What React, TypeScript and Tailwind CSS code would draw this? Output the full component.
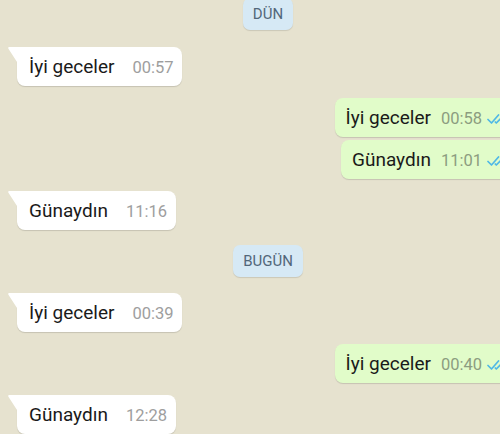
import React from 'react'

type Msg =
  | { kind: 'day'; label: string; mt: string }
  | { kind: 'in' | 'out'; text: string; time: string; mt: string; tail?: boolean }

const items: Msg[] = [
  { kind: 'day', label: 'DÜN', mt: 'mt-[-2px]' },
  { kind: 'in', text: 'İyi geceler', time: '00:57', mt: 'mt-[17px]', tail: true },
  { kind: 'out', text: 'İyi geceler', time: '00:58', mt: 'mt-[12px]', tail: true },
  { kind: 'out', text: 'Günaydın', time: '11:01', mt: 'mt-[3px]' },
  { kind: 'in', text: 'Günaydın', time: '11:16', mt: 'mt-[12px]', tail: true },
  { kind: 'day', label: 'BUGÜN', mt: 'mt-[15px]' },
  { kind: 'in', text: 'İyi geceler', time: '00:39', mt: 'mt-[16px]', tail: true },
  { kind: 'out', text: 'İyi geceler', time: '00:40', mt: 'mt-[12px]', tail: true },
  { kind: 'in', text: 'Günaydın', time: '12:28', mt: 'mt-[12px]', tail: true },
]

function DoubleTick() {
  return (
    <svg width="18" height="12" viewBox="0 0 18 12" fill="none" className="ml-[5px] mt-[3px] shrink-0">
      <path d="M1 6.5l3.5 3.5L11.5 2" stroke="#4fb8e6" strokeWidth="1.7" strokeLinecap="round" strokeLinejoin="round" />
      <path d="M8.3 9l1 1L17 2" stroke="#4fb8e6" strokeWidth="1.7" strokeLinecap="round" strokeLinejoin="round" />
    </svg>
  )
}

function DayBadge({ label, mt }: { label: string; mt: string }) {
  return (
    <div className={`${mt} self-center h-[32px] px-[10px] flex items-center rounded-[7px] bg-[#d6e9f5] shadow-[0_1px_1px_rgba(0,0,0,0.12)]`}>
      <span className="text-[15px] text-[#52677a]">{label}</span>
    </div>
  )
}

function Bubble({ kind, text, time, mt, tail }: { kind: 'in' | 'out'; text: string; time: string; mt: string; tail?: boolean }) {
  const incoming = kind === 'in'
  return (
    <div
      className={`${mt} relative h-[39px] flex items-center rounded-[8px] shadow-[0_1px_1px_rgba(0,0,0,0.14)] ${
        incoming
          ? 'self-start ml-[17px] bg-white pl-[12px] pr-[9px] rounded-tl-none'
          : 'self-end mr-[23px] bg-[#e1fcc9] pl-[11px] pr-[8px] rounded-tr-none'
      }`}
    >
      {tail && incoming && (
        <svg width="10" height="17" viewBox="0 0 10 17" className="absolute left-[-9px] top-0">
          <path d="M10 0H1.5C0.3 0 -0.2 1 0.6 1.9L10 16.5Z" fill="#ffffff" />
        </svg>
      )}
      {tail && !incoming && (
        <svg width="10" height="17" viewBox="0 0 10 17" className="absolute right-[-9px] top-0">
          <path d="M0 0H8.5C9.7 0 10.2 1 9.4 1.9L0 16.5Z" fill="#e1fcc9" />
        </svg>
      )}
      <span className="text-[19px] leading-[22px] text-[#1a1a1a]">{text}</span>
      <span
        className={`text-[16.5px] leading-[22px] pt-[3px] ${
          incoming ? 'ml-[18px] text-[#9e9e9e]' : 'ml-[10px] text-[#8c9c80]'
        }`}
      >
        {time}
      </span>
      {!incoming && <DoubleTick />}
    </div>
  )
}

export default function App() {
  return (
    <div className="w-[500px] h-[434px] overflow-hidden bg-[#e6e2cf] font-['Roboto',sans-serif]">
      <div className="w-[536px] flex flex-col">
        {items.map((m, i) =>
          m.kind === 'day' ? (
            <DayBadge key={i} label={m.label} mt={m.mt} />
          ) : (
            <Bubble key={i} kind={m.kind} text={m.text} time={m.time} mt={m.mt} tail={m.tail} />
          )
        )}
      </div>
    </div>
  )
}
